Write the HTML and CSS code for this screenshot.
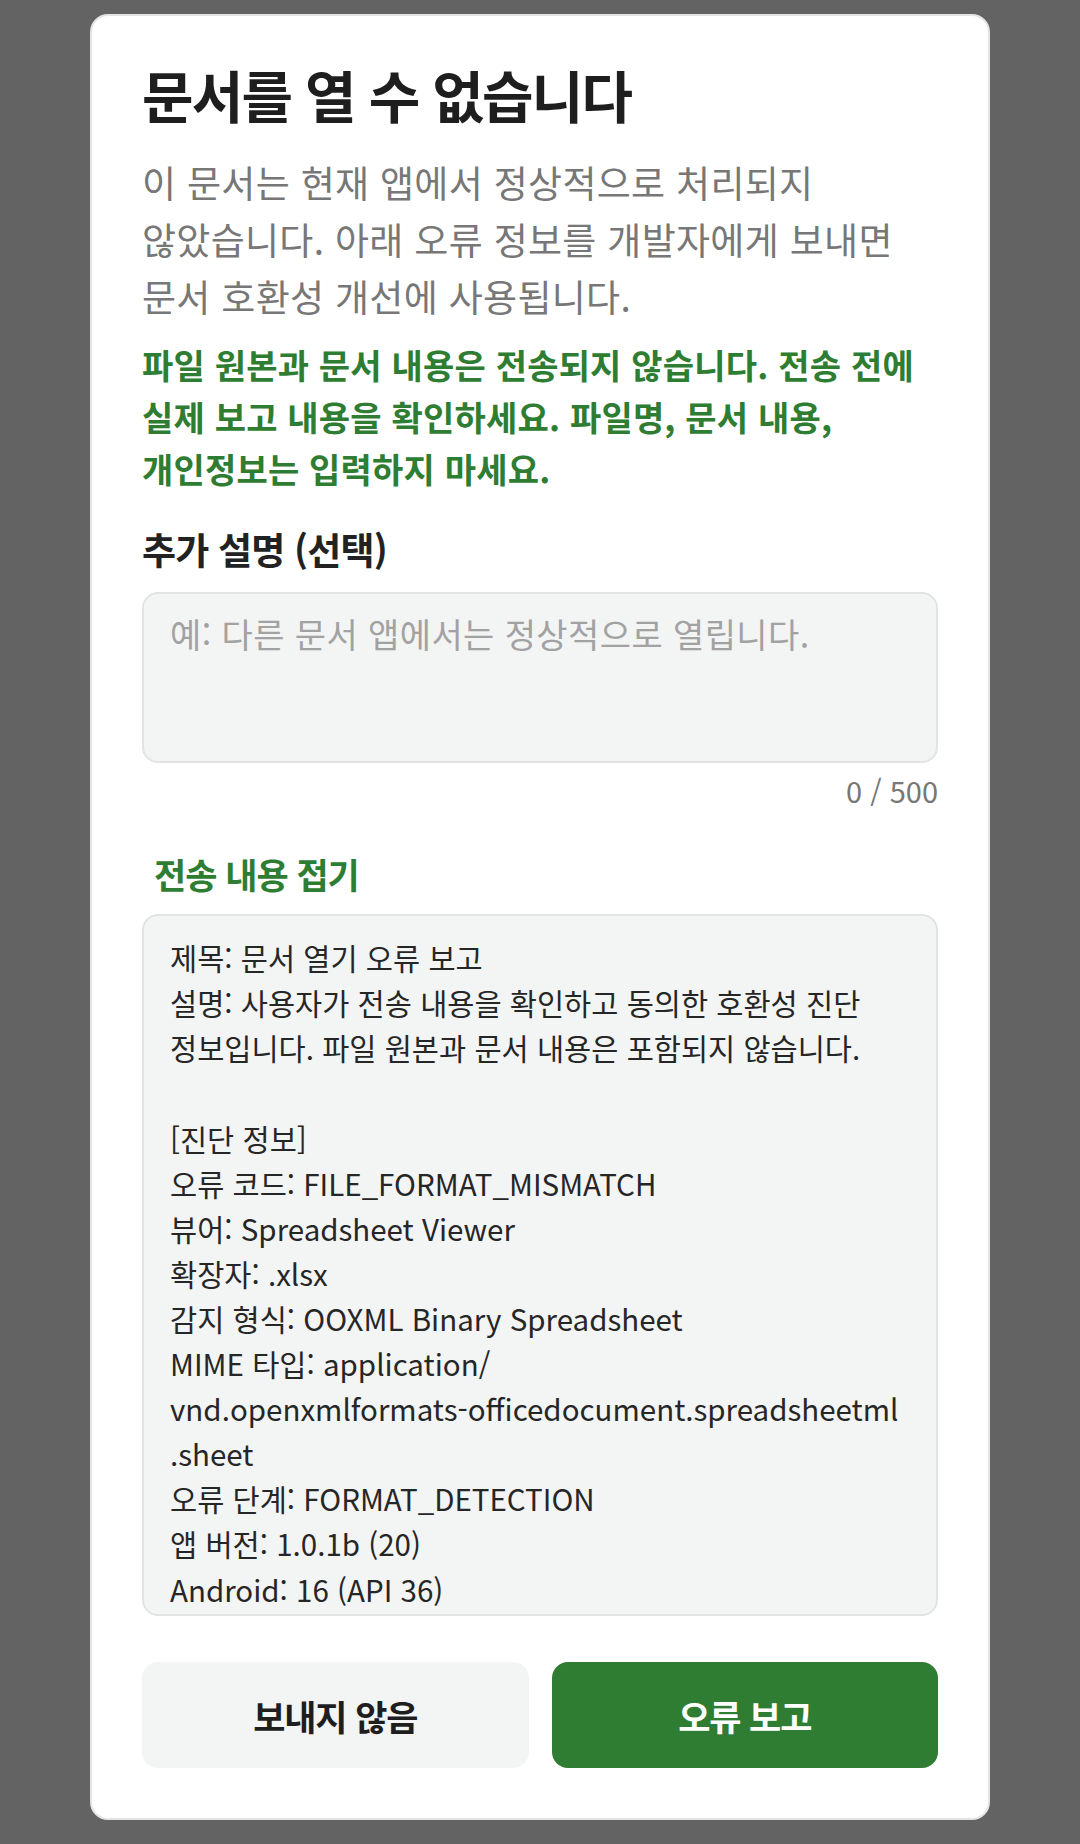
FILE: index.html
```html
<!DOCTYPE html>
<html lang="ko">
<head>
    <meta charset="UTF-8">
    <meta name="viewport" content="width=device-width, initial-scale=1.0">
    <title>문서를 열 수 없습니다</title>
    <link rel="stylesheet" href="styles.css">
</head>
<body>
    <div class="dialog">
        <h1 class="title">문서를 열 수 없습니다</h1>
        <p class="message">이 문서는 현재 앱에서 정상적으로 처리되지 않았습니다. 아래 오류 정보를 개발자에게 보내면 문서 호환성 개선에 사용됩니다.</p>
        <p class="notice">파일 원본과 문서 내용은 전송되지 않습니다. 전송 전에 실제 보고 내용을 확인하세요. 파일명, 문서 내용, 개인정보는 입력하지 마세요.</p>

        <label class="field-label" for="comment">추가 설명 (선택)</label>
        <textarea id="comment" class="comment" maxlength="500" placeholder="예: 다른 문서 앱에서는 정상적으로 열립니다."></textarea>
        <div class="counter">0 / 500</div>

        <button type="button" class="toggle">전송 내용 접기</button>

        <div class="report">
            <div>제목: 문서 열기 오류 보고</div>
            <div>설명: 사용자가 전송 내용을 확인하고 동의한 호환성 진단 정보입니다. 파일 원본과 문서 내용은 포함되지 않습니다.</div>
            <div class="blank"></div>
            <div>[진단 정보]</div>
            <div>오류 코드: FILE_FORMAT_MISMATCH</div>
            <div>뷰어: Spreadsheet Viewer</div>
            <div>확장자: .xlsx</div>
            <div>감지 형식: OOXML Binary Spreadsheet</div>
            <div>MIME 타입: application/<br>vnd.openxmlformats-officedocument.spreadsheetml<br>.sheet</div>
            <div>오류 단계: FORMAT_DETECTION</div>
            <div>앱 버전: 1.0.1b (20)</div>
            <div>Android: 16 (API 36)</div>
        </div>

        <div class="actions">
            <button type="button" class="btn btn-secondary">보내지 않음</button>
            <button type="button" class="btn btn-primary">오류 보고</button>
        </div>
    </div>
</body>
</html>
```

FILE: styles.css
```css
html, body {
    margin: 0;
    padding: 0;
}

body {
    background-color: #636363;
    font-family: "Noto Sans CJK KR", "Noto Sans", sans-serif;
    min-height: 1844px;
    padding-top: 14px;
    box-sizing: border-box;
}

.dialog {
    width: 900px;
    height: 1806px;
    margin: 0 auto;
    box-sizing: border-box;
    background-color: #ffffff;
    border: 2px solid #e4e4e4;
    border-radius: 18px;
    padding: 43px 50px 0 50px;
    display: flex;
    flex-direction: column;
}

.title {
    margin: 0;
    font-size: 56px;
    line-height: 70px;
    font-weight: 700;
    color: #1e1e1e;
    letter-spacing: -1.8px;
}

.message {
    margin: 25px 0 0;
    font-size: 37px;
    line-height: 57px;
    color: #777777;
    letter-spacing: 0.3px;
    word-break: keep-all;
}

.notice {
    margin: 14px 0 0;
    font-size: 34px;
    line-height: 51.75px;
    font-weight: 700;
    color: #2e7d32;
    letter-spacing: 0.2px;
    word-break: keep-all;
}

.field-label {
    margin-top: 30px;
    font-size: 37px;
    line-height: 50px;
    font-weight: 700;
    color: #222222;
    letter-spacing: -0.8px;
}

.comment {
    margin-top: 18px;
    height: 171px;
    box-sizing: border-box;
    padding: 17px 26px;
    font-family: inherit;
    font-size: 34px;
    line-height: 46px;
    letter-spacing: 0.4px;
    color: #222222;
    background-color: #f3f4f4;
    border: 2px solid #e2e4e4;
    border-radius: 16px;
    resize: none;
    outline: none;
}

.comment::placeholder {
    color: #a2a2a2;
}

.counter {
    margin-top: 9px;
    text-align: right;
    font-size: 29px;
    line-height: 36px;
    color: #777777;
}

.toggle {
    align-self: flex-start;
    margin-top: 41px;
    padding: 0 12px;
    background: none;
    border: none;
    font-family: inherit;
    font-size: 35px;
    line-height: 50px;
    font-weight: 700;
    color: #2e7d32;
    letter-spacing: -1px;
}

.report {
    margin-top: 15px;
    height: 702px;
    box-sizing: border-box;
    padding: 19px 26px 0;
    overflow: hidden;
    background-color: #f3f4f4;
    border: 2px solid #e2e4e4;
    border-radius: 16px;
    font-size: 29.5px;
    line-height: 45.1px;
    color: #262626;
    letter-spacing: 0;
    word-break: keep-all;
    overflow-wrap: anywhere;
}

.report .blank {
    height: 45.1px;
}

.actions {
    margin-top: 46px;
    display: flex;
    gap: 23px;
}

.btn {
    flex: 1;
    height: 106px;
    border: none;
    border-radius: 16px;
    font-family: inherit;
    font-size: 35px;
    font-weight: 700;
    letter-spacing: -1.1px;
}

.btn-secondary {
    background-color: #f3f4f4;
    color: #1e1e1e;
}

.btn-primary {
    background-color: #2e7d32;
    color: #ffffff;
}
```
